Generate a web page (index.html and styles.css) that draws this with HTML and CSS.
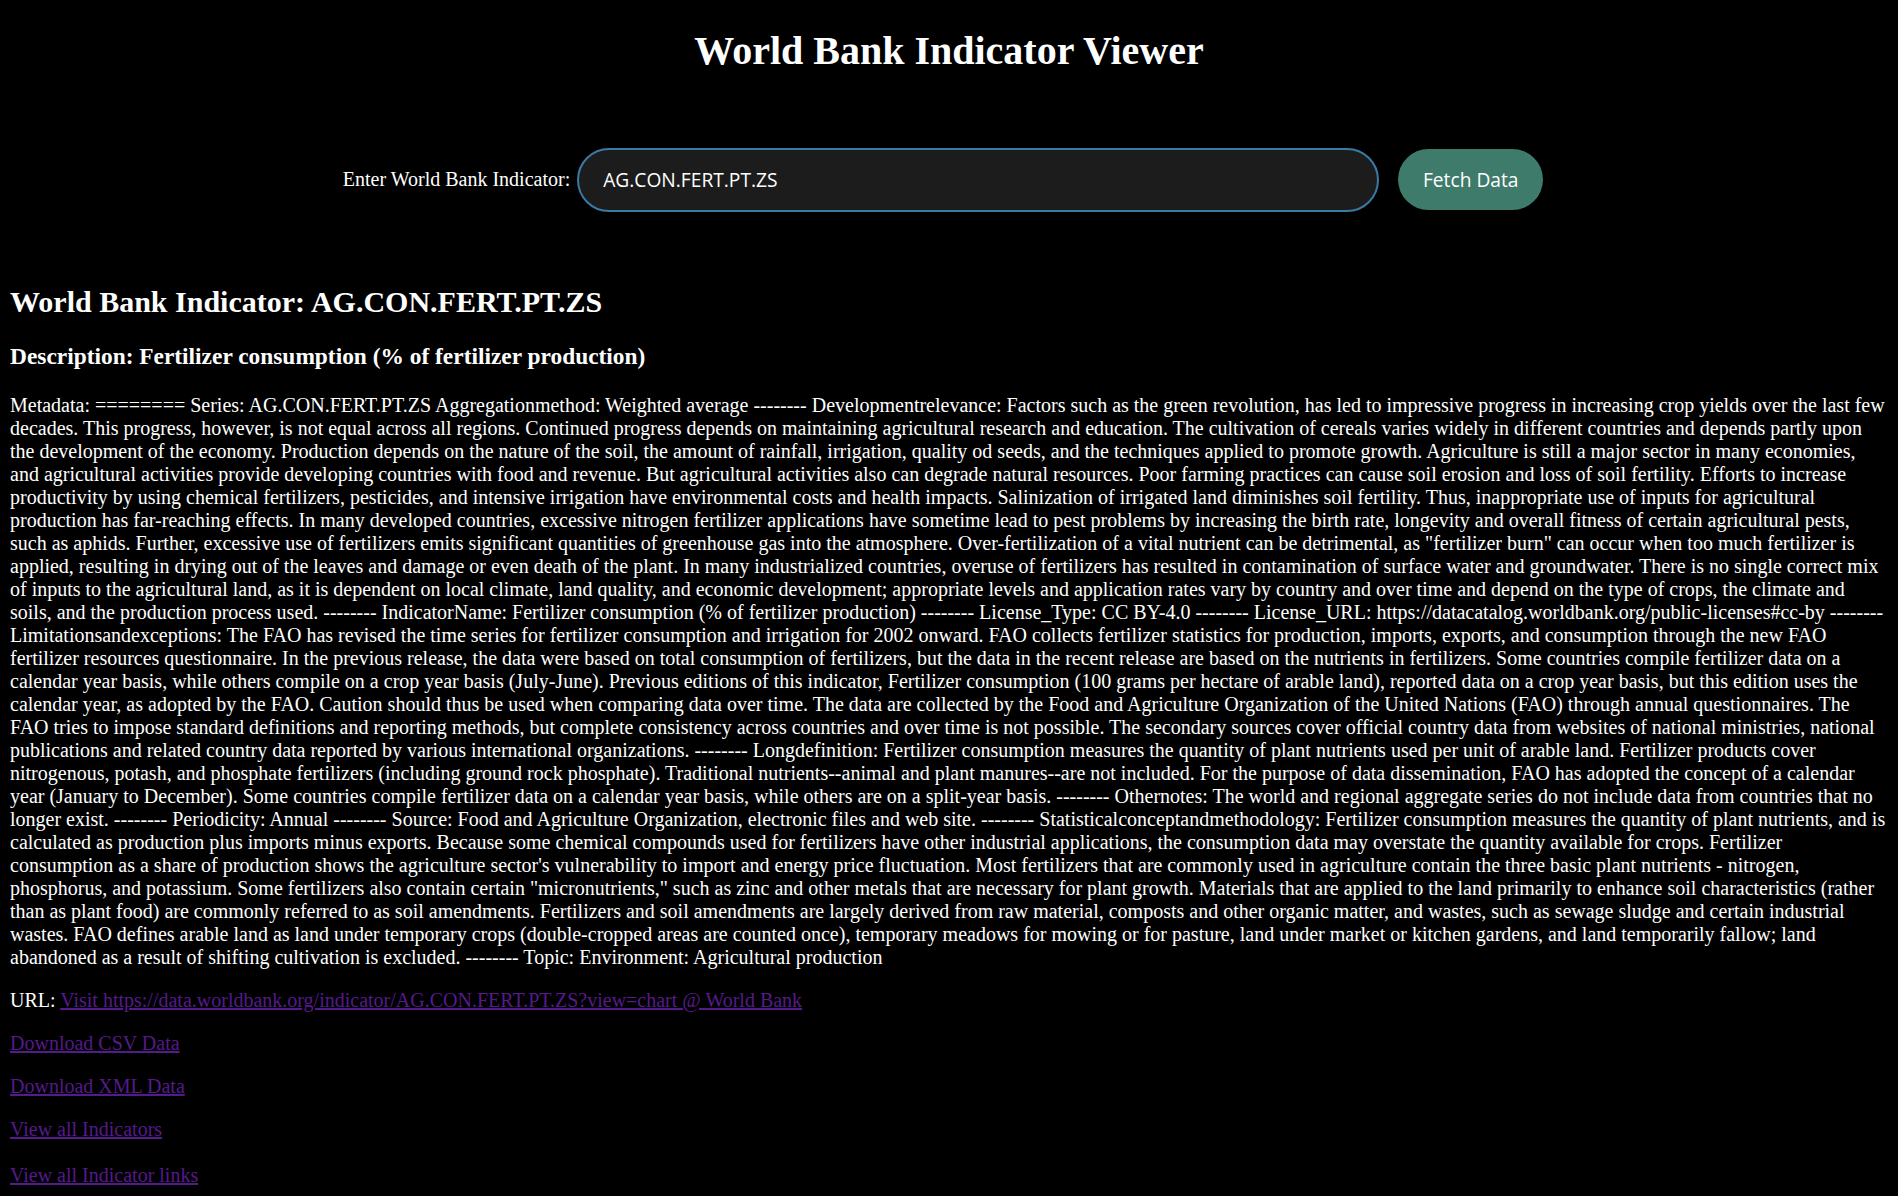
FILE: index.html
```html
<!DOCTYPE html>
<html lang="en">
<head>
<meta charset="utf-8">
<title>World Bank Indicator Viewer</title>
<link rel="stylesheet" href="styles.css">
</head>
<body>
<h1 class="title">World Bank Indicator Viewer</h1>
<form class="search">
  <label class="search-label" for="indicator">Enter World Bank Indicator:</label>
  <input class="search-input" id="indicator" type="text" value="AG.CON.FERT.PT.ZS">
  <button class="search-btn" type="button">Fetch Data</button>
</form>
<h2 class="ind-title">World Bank Indicator: AG.CON.FERT.PT.ZS</h2>
<h3 class="ind-desc">Description: Fertilizer consumption (% of fertilizer production)</h3>
<p class="meta">Metadata: ======== Series: AG.CON.FERT.PT.ZS Aggregationmethod: Weighted average -------- Developmentrelevance: Factors such as the green revolution, has led to impressive progress in increasing crop yields over the last few decades. This progress, however, is not equal across all regions. Continued progress depends on maintaining agricultural research and education. The cultivation of cereals varies widely in different countries and depends partly upon the development of the economy. Production depends on the nature of the soil, the amount of rainfall, irrigation, quality od seeds, and the techniques applied to promote growth. Agriculture is still a major sector in many economies, and agricultural activities provide developing countries with food and revenue. But agricultural activities also can degrade natural resources. Poor farming practices can cause soil erosion and loss of soil fertility. Efforts to increase productivity by using chemical fertilizers, pesticides, and intensive irrigation have environmental costs and health impacts. Salinization of irrigated land diminishes soil fertility. Thus, inappropriate use of inputs for agricultural production has far-reaching effects. In many developed countries, excessive nitrogen fertilizer applications have sometime lead to pest problems by increasing the birth rate, longevity and overall fitness of certain agricultural pests, such as aphids. Further, excessive use of fertilizers emits significant quantities of greenhouse gas into the atmosphere. Over-fertilization of a vital nutrient can be detrimental, as "fertilizer burn" can occur when too much fertilizer is applied, resulting in drying out of the leaves and damage or even death of the plant. In many industrialized countries, overuse of fertilizers has resulted in contamination of surface water and groundwater. There is no single correct mix of inputs to the agricultural land, as it is dependent on local climate, land quality, and economic development; appropriate levels and application rates vary by country and over time and depend on the type of crops, the climate and soils, and the production process used. -------- IndicatorName: Fertilizer consumption (% of fertilizer production) -------- License_Type: CC BY-4.0 -------- License_URL: https://datacatalog.worldbank.org/public-licenses#cc-by -------- Limitationsandexceptions: The FAO has revised the time series for fertilizer consumption and irrigation for 2002 onward. FAO collects fertilizer statistics for production, imports, exports, and consumption through the new FAO fertilizer resources questionnaire. In the previous release, the data were based on total consumption of fertilizers, but the data in the recent release are based on the nutrients in fertilizers. Some countries compile fertilizer data on a calendar year basis, while others compile on a crop year basis (July-June). Previous editions of this indicator, Fertilizer consumption (100 grams per hectare of arable land), reported data on a crop year basis, but this edition uses the calendar year, as adopted by the FAO. Caution should thus be used when comparing data over time. The data are collected by the Food and Agriculture Organization of the United Nations (FAO) through annual questionnaires. The FAO tries to impose standard definitions and reporting methods, but complete consistency across countries and over time is not possible. The secondary sources cover official country data from websites of national ministries, national publications and related country data reported by various international organizations. -------- Longdefinition: Fertilizer consumption measures the quantity of plant nutrients used per unit of arable land. Fertilizer products cover nitrogenous, potash, and phosphate fertilizers (including ground rock phosphate). Traditional nutrients--animal and plant manures--are not included. For the purpose of data dissemination, FAO has adopted the concept of a calendar year (January to December). Some countries compile fertilizer data on a calendar year basis, while others are on a split-year basis. -------- Othernotes: The world and regional aggregate series do not include data from countries that no longer exist. -------- Periodicity: Annual -------- Source: Food and Agriculture Organization, electronic files and web site. -------- Statisticalconceptandmethodology: Fertilizer consumption measures the quantity of plant nutrients, and is calculated as production plus imports minus exports. Because some chemical compounds used for fertilizers have other industrial applications, the consumption data may overstate the quantity available for crops. Fertilizer consumption as a share of production shows the agriculture sector's vulnerability to import and energy price fluctuation. Most fertilizers that are commonly used in agriculture contain the three basic plant nutrients - nitrogen, phosphorus, and potassium. Some fertilizers also contain certain "micronutrients," such as zinc and other metals that are necessary for plant growth. Materials that are applied to the land primarily to enhance soil characteristics (rather than as plant food) are commonly referred to as soil amendments. Fertilizers and soil amendments are largely derived from raw material, composts and other organic matter, and wastes, such as sewage sludge and certain industrial wastes. FAO defines arable land as land under temporary crops (double-cropped areas are counted once), temporary meadows for mowing or for pasture, land under market or kitchen gardens, and land temporarily fallow; land abandoned as a result of shifting cultivation is excluded. -------- Topic: Environment: Agricultural production</p>
<p class="line">URL: <a class="link" href="#">Visit https://data.worldbank.org/indicator/AG.CON.FERT.PT.ZS?view=chart @ World Bank</a></p>
<p class="line"><a class="link" href="#">Download CSV Data</a></p>
<p class="line"><a class="link" href="#">Download XML Data</a></p>
<p class="line"><a class="link" href="#">View all Indicators</a></p>
<p class="line line-last"><a class="link" href="#">View all Indicator links</a></p>
</body>
</html>
```
FILE: styles.css
```css
html, body {
  background: #000;
}
body {
  margin: 0 10px 10px;
  color: #fff;
  font-family: "Liberation Serif", "Times New Roman", serif;
  font-size: 20px;
  line-height: normal;
}
.title {
  font-size: 40px;
  font-weight: bold;
  text-align: center;
  margin: 26.8px 0;
}
.search {
  display: flex;
  align-items: center;
  justify-content: center;
  padding: 47.4px 12px 47.7px 0;
  margin: 0;
}
.search-label {
  font-size: 20px;
  margin-right: 7px;
}
.search-input {
  box-sizing: border-box;
  width: 802px;
  height: 64px;
  border: 2px solid #3a7aa6;
  border-radius: 32px;
  background: #1c1c1c;
  color: #fff;
  font-family: "Open Sans", "Noto Sans", sans-serif;
  font-size: 19.2px;
  padding: 0 24px;
  margin: 0 19px 0 0;
  outline: none;
}
.search-btn {
  box-sizing: border-box;
  width: 145px;
  height: 61px;
  border: none;
  border-radius: 31px;
  background: #3e7b6b;
  color: #fff;
  font-family: "Open Sans", "Noto Sans", sans-serif;
  font-size: 19.2px;
  padding: 0;
  margin: 0;
  cursor: pointer;
}
.ind-title {
  font-size: 30px;
  font-weight: bold;
  margin: 24.9px 0;
}
.ind-desc {
  font-size: 23.4px;
  font-weight: bold;
  margin: 23.4px 0;
}
.meta {
  margin: 20px 0;
}
.line {
  margin: 20px 0;
}
.line-last {
  margin-top: 23px;
}
.link {
  color: #551a8b;
  text-decoration: underline;
}
```
